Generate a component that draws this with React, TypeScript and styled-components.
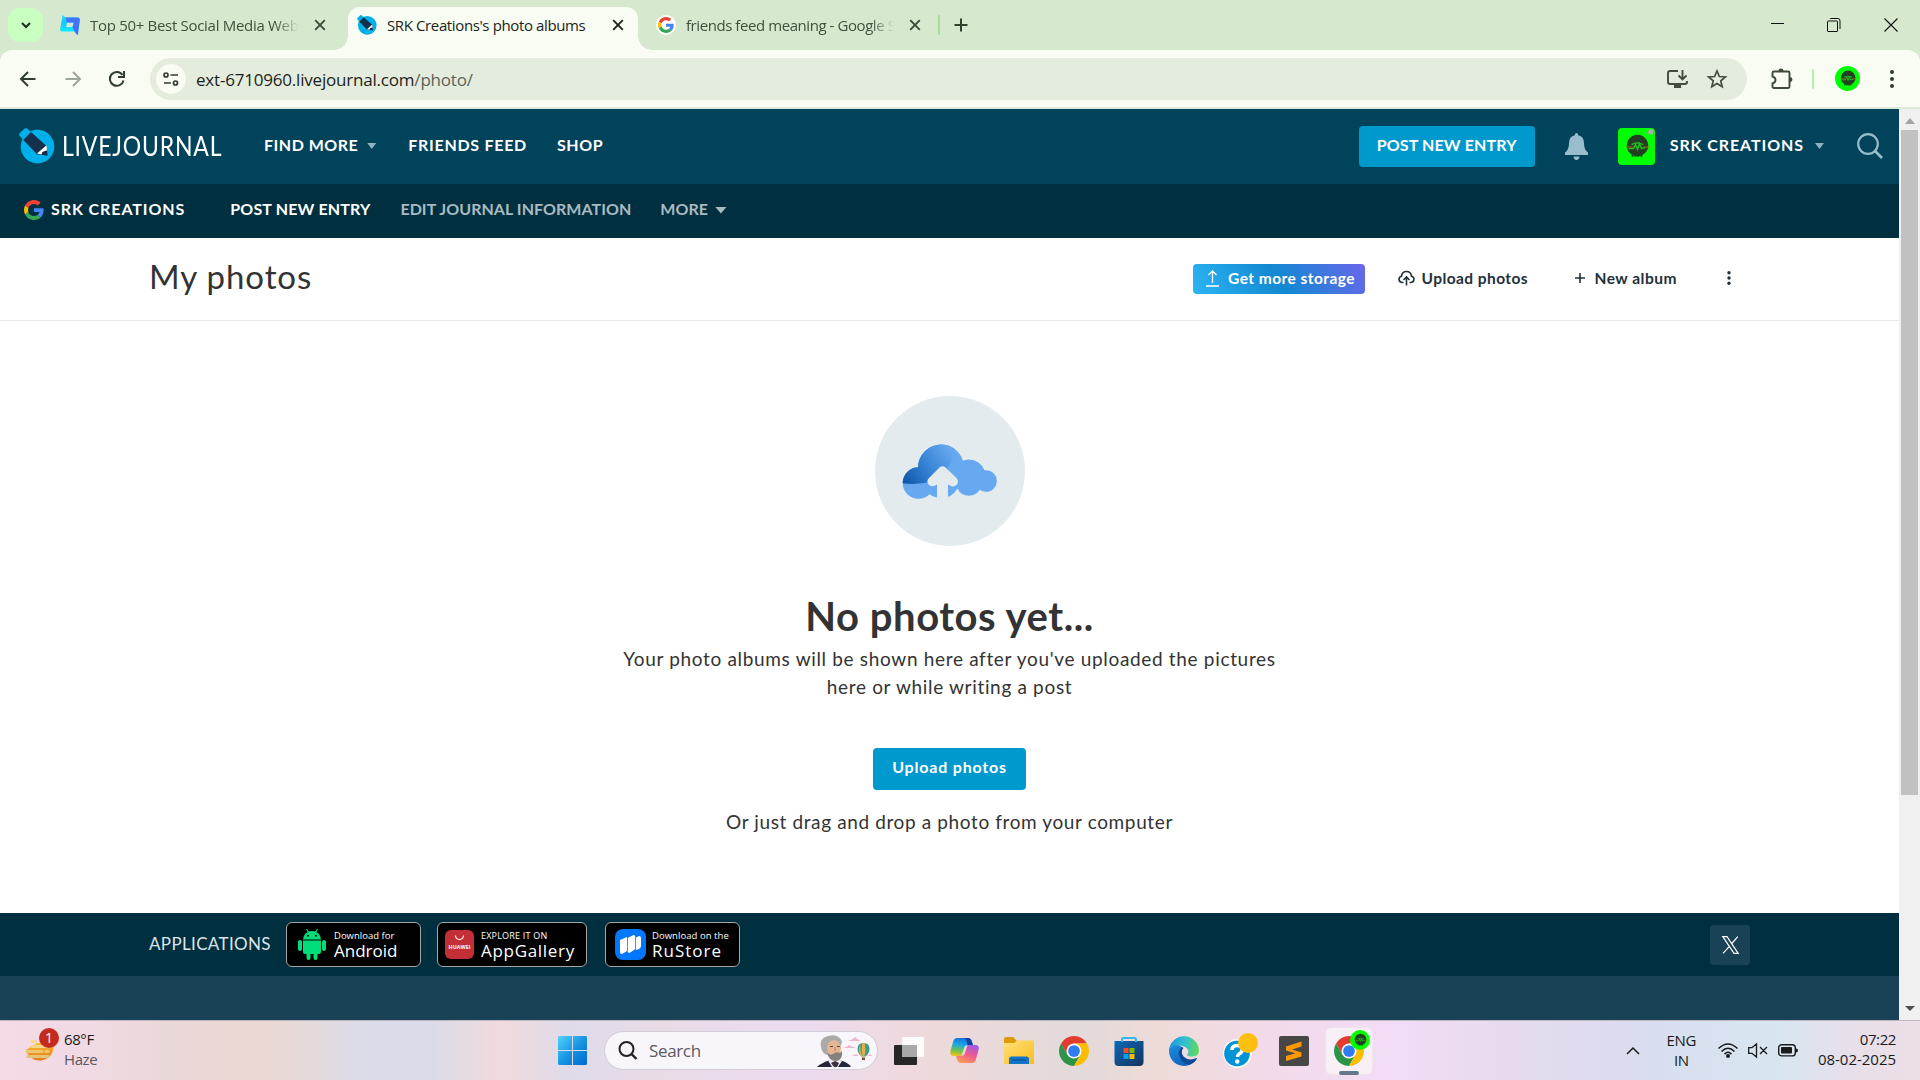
import React from "react";
import styled, { createGlobalStyle, css } from "styled-components";

const ui = `"Open Sans", "Noto Sans", sans-serif`;
const brand = `Lato, "Open Sans", sans-serif`;

const Global = createGlobalStyle`
  *, *::before, *::after { box-sizing: border-box; }
  html, body { margin: 0; padding: 0; }
  body { width: 1920px; height: 1080px; overflow: hidden; background: #fff; font-family: ${brand}; }
  svg { display: block; flex: none; overflow: visible; }
`;

const Screen = styled.div`
  width: 1920px;
  height: 1080px;
  display: flex;
  flex-direction: column;
  overflow: hidden;
`;

/* ---------- browser chrome ---------- */

const TabStrip = styled.div`
  height: 50px;
  background: #d6e9cf;
  display: flex;
  align-items: center;
  padding-left: 8px;
  font-family: ${ui};
`;

const TabSearch = styled.div`
  width: 35px;
  height: 34px;
  border-radius: 12px;
  background: #caffc2;
  display: grid;
  place-items: center;
`;

const Tab = styled.div<{ $width: number; $pl: number; $pr: number; $active?: boolean }>`
  width: ${(p) => p.$width}px;
  height: 43px;
  align-self: flex-end;
  display: flex;
  align-items: center;
  padding: 0 ${(p) => p.$pr}px 7px ${(p) => p.$pl}px;
  gap: 10px;
  color: #41503f;
  position: relative;
  ${(p) =>
    p.$active &&
    css`
      background: #f8fcf2;
      color: #1c231b;
      border-radius: 12px 12px 0 0;
      &::before,
      &::after {
        content: "";
        position: absolute;
        bottom: 0;
        width: 14px;
        height: 14px;
      }
      &::before {
        left: -14px;
        background: radial-gradient(circle at 0 0, transparent 13.5px, #f8fcf2 14px);
      }
      &::after {
        right: -14px;
        background: radial-gradient(circle at 100% 0, transparent 13.5px, #f8fcf2 14px);
      }
    `}
`;

const TabTitle = styled.span<{ $ls: number; $fade?: boolean }>`
  flex: 1;
  min-width: 0;
  margin-right: 5px;
  overflow: hidden;
  white-space: nowrap;
  font-size: 15px;
  line-height: 22px;
  letter-spacing: ${(p) => p.$ls}px;
  ${(p) => p.$fade && css`mask-image: linear-gradient(90deg, #000 calc(100% - 24px), transparent);`}
`;

const Divider = styled.div<{ $color: string; $ml: number; $mr: number }>`
  width: 2px;
  height: 20px;
  border-radius: 1px;
  background: ${(p) => p.$color};
  margin: 0 ${(p) => p.$mr}px 0 ${(p) => p.$ml}px;
`;

const WindowButtons = styled.div`
  margin-left: auto;
  display: flex;
  align-items: center;
  gap: 43px;
  padding-right: 22px;
`;

const Toolbar = styled.div`
  height: 57px;
  background: linear-gradient(#d6e9cf, #d6e9cf) top / 100% 12px no-repeat;
`;
const ToolbarInner = styled.div`
  height: 57px;
  background: #f8fcf2;
  border-radius: 12px 12px 0 0;
  display: flex;
  align-items: center;
  padding: 0 18px;
`;

const NavIcons = styled.div`
  display: flex;
  gap: 24.5px;
  width: 132px;
`;

const Omnibox = styled.div`
  width: 1597px;
  height: 42px;
  border-radius: 21px;
  background: #e4ecdd;
  display: flex;
  align-items: center;
  padding: 0 20px 0 6px;
`;

const SiteInfo = styled.div`
  width: 30px;
  height: 30px;
  border-radius: 50%;
  background: #f8fcf2;
  display: grid;
  place-items: center;
  margin-right: 10px;
`;

const Url = styled.div`
  flex: 1;
  padding-top: 2px;
  font-family: ${ui};
  font-size: 17px;
  line-height: 24px;
  letter-spacing: -0.2px;
  color: #1b1f1a;
  span { color: #5b635a; }
`;

const OmniActions = styled.div`
  display: flex;
  align-items: center;
  gap: 19px;
`;

const Extensions = styled.div`
  display: flex;
  align-items: center;
  margin-left: 24px;
`;

const MenuButton = styled.div`
  margin-left: 29px;
`;

const ChromeEdge = styled.div`
  height: 2px;
  background: #dfe8d9;
`;

/* ---------- page ---------- */

const Viewport = styled.div`
  height: 911px;
  display: flex;
`;

const Page = styled.div`
  width: 1899px;
  display: flex;
  flex-direction: column;
  background: #fff;
  color: #333;
`;

const Scrollbar = styled.div`
  width: 21px;
  background: #f0f0f0;
  display: flex;
  flex-direction: column;
  align-items: center;
  justify-content: space-between;
  padding: 9px 0 8px;
`;
const ScrollThumb = styled.div`
  width: 17px;
  height: 665px;
  margin: 6px 0 auto;
  background: #c1c1c1;
`;

const Header = styled.header`
  height: 75px;
  background: #00435a;
  display: flex;
  align-items: center;
  padding: 0 16px 1px 19px;
`;

const Wordmark = styled.div`
  width: 202px;
  margin: 0 0 1px 7px;
  font-size: 26px;
  line-height: 32px;
  letter-spacing: 0.9px;
  color: #fff;
  span {
    display: inline-block;
    transform: scaleX(0.885);
    transform-origin: left;
  }
`;

const NavLink = styled.span<{ $ls?: number; $ml?: number; $muted?: boolean }>`
  font-size: 16px;
  font-weight: 700;
  line-height: 20px;
  white-space: nowrap;
  letter-spacing: ${(p) => p.$ls ?? 0.5}px;
  margin-left: ${(p) => p.$ml ?? 0}px;
  margin-bottom: 2px;
  color: ${(p) => (p.$muted ? "#a9bac2" : "#fff")};
`;

const Caret = styled.i<{ $w: number; $h: number; $ml: number; $color?: string }>`
  width: ${(p) => p.$w}px;
  height: ${(p) => p.$h}px;
  margin-left: ${(p) => p.$ml}px;
  background: ${(p) => p.$color ?? "#8fb2c1"};
  clip-path: polygon(0 0, 100% 0, 50% 100%);
`;

const HeaderRight = styled.div`
  margin-left: auto;
  display: flex;
  align-items: center;
  gap: 30px;
`;
const Account = styled.div`
  display: flex;
  align-items: center;
  padding-right: 3px;
`;

const PrimaryButton = styled.button<{ $w: number; $h: number; $ls: number; $pb?: number }>`
  width: ${(p) => p.$w}px;
  height: ${(p) => p.$h}px;
  padding: 0 0 ${(p) => p.$pb ?? 3}px;
  border: 0;
  border-radius: 4px;
  background: #0099ce;
  color: #fff;
  font: 700 16px/20px ${brand};
  letter-spacing: ${(p) => p.$ls}px;
  white-space: nowrap;
`;

const SubHeader = styled.nav`
  height: 54px;
  background: #002f3f;
  display: flex;
  align-items: center;
  padding: 0 0 2px 24px;
`;

const TitleBar = styled.div`
  height: 83px;
  border-bottom: 1px solid #e8e9e9;
  padding: 0 167px 0 149px;
  display: flex;
  align-items: center;
`;

const Title = styled.h1`
  margin: 0 auto 6px 0;
  font-size: 33px;
  line-height: 40px;
  font-weight: 400;
  letter-spacing: 0.9px;
  color: #333;
`;

const StorageButton = styled.button`
  width: 172px;
  height: 30px;
  border: 0;
  border-radius: 4px;
  padding: 0 0 2px 13px;
  display: flex;
  align-items: center;
  gap: 9px;
  background: linear-gradient(60deg, #2cb5f4 0%, #1288d2 50%, #6a66ea 100%);
  color: #fff;
  font: 700 15.5px/20px ${brand};
  letter-spacing: 0.45px;
  white-space: nowrap;
`;

const ToolAction = styled.span<{ $ml: number; $gap: number; $ls?: number }>`
  display: flex;
  align-items: center;
  gap: ${(p) => p.$gap}px;
  margin-left: ${(p) => p.$ml}px;
  margin-bottom: 2px;
  letter-spacing: ${(p) => p.$ls ?? 0}px;
  font-size: 15.5px;
  font-weight: 700;
  line-height: 20px;
  color: #22313a;
  white-space: nowrap;
`;

const Empty = styled.main`
  height: 592px;
  display: flex;
  flex-direction: column;
  align-items: center;
  padding-top: 75px;
`;

const CloudDisc = styled.div`
  width: 150px;
  height: 150px;
  border-radius: 50%;
  background: #e3ebee;
`;

const EmptyTitle = styled.h2`
  margin: 44px 0 0;
  font-size: 40px;
  line-height: 52px;
  font-weight: 700;
  letter-spacing: 0.55px;
  color: #333;
`;

const EmptyText = styled.p<{ $mt: number; $ls: number }>`
  margin: ${(p) => p.$mt}px 0 0;
  font-size: 19px;
  line-height: 28px;
  letter-spacing: ${(p) => p.$ls}px;
  text-align: center;
  color: #333;
  white-space: nowrap;
`;

const UploadArea = styled.div`
  margin-top: 47px;
`;

const Footer = styled.footer`
  height: 63px;
  background: #002f3f;
  display: flex;
  align-items: center;
  padding: 0 149px;
`;

const FooterLabel = styled.span`
  width: 137px;
  margin-bottom: 2px;
  font-size: 17px;
  line-height: 22px;
  letter-spacing: 0.35px;
  color: #dbe5e9;
`;

const StoreBadge = styled.div<{ $w: number; $mr: number; $pl: number; $gap: number }>`
  width: ${(p) => p.$w}px;
  height: 45px;
  margin-right: ${(p) => p.$mr}px;
  padding-left: ${(p) => p.$pl}px;
  display: flex;
  align-items: center;
  gap: ${(p) => p.$gap}px;
  border: 1px solid #a6a6a6;
  border-radius: 6px;
  background: #000;
  color: #fff;
`;

const BadgeText = styled.div<{ $small: number; $ls: number; $big: number; $bls: number; $w?: number }>`
  display: flex;
  flex-direction: column;
  white-space: nowrap;
  font-family: "Open Sans", sans-serif;
  small {
    font-size: ${(p) => p.$small}px;
    line-height: 11px;
    letter-spacing: ${(p) => p.$ls}px;
  }
  b {
    font-weight: ${(p) => p.$w ?? 400};
    font-size: ${(p) => p.$big}px;
    line-height: 19px;
    letter-spacing: ${(p) => p.$bls}px;
  }
`;

const SocialButton = styled.div`
  width: 40px;
  height: 40px;
  margin: 1px 0 0 auto;
  border-radius: 4px;
  background: #1a4256;
  display: grid;
  place-items: center;
`;

const FooterLower = styled.div`
  flex: 1;
  background: #1a4256;
`;

/* ---------- taskbar ---------- */

const Taskbar = styled.div`
  height: 60px;
  border-top: 1px solid #bdb6c0;
  display: flex;
  align-items: center;
  font-family: ${ui};
  color: #1b1b1b;
  background: linear-gradient(
    90deg,
    #f4dbe6 0, #f1dae3 90px, #e9d8d8 170px, #ead8d3 270px, #e2dadd 320px, #dcdce9 360px,
    #dadce9 430px, #f0dadd 500px, #e0dbea 570px, #e9dbe6 660px, #ecdbf0 800px, #eed9da 930px,
    #e3dada 1080px, #eedbd8 1160px, #f3daea 1270px, #f2ddf6 1390px, #e8daee 1500px,
    #d9ddee 1640px, #d8e6f1 1780px, #e7dfea 1850px, #eddfe6 1920px
  );
`;

const Weather = styled.div`
  width: 558px;
  padding-left: 25px;
  display: flex;
  align-items: center;
  gap: 9px;
`;
const WeatherIcon = styled.div`
  width: 30px;
  height: 60px;
  position: relative;
`;
const Count = styled.span`
  position: absolute;
  left: 14px;
  top: 7px;
  width: 20px;
  height: 20px;
  border-radius: 50%;
  background: #c42b1c;
  color: #fff;
  font-size: 14px;
  line-height: 20px;
  text-align: center;
`;
const TwoLines = styled.div<{ $align?: string; $mb?: number }>`
  display: flex;
  flex-direction: column;
  margin-bottom: ${(p) => p.$mb ?? 4}px;
  text-align: ${(p) => p.$align ?? "left"};
  font-size: 15px;
  line-height: 20px;
  letter-spacing: -0.4px;
  white-space: nowrap;
`;
const Dim = styled.span`
  color: #5c585d;
`;
const DateText = styled.span`
  letter-spacing: -0.02px;
`;

const SearchPill = styled.div`
  width: 274px;
  height: 39px;
  margin: 0 16px 0 17px;
  border-radius: 20px;
  border: 1px solid #d2cbd8;
  background: #f8f5fb;
  display: flex;
  align-items: center;
  padding: 0 4px 0 13px;
  font-size: 17px;
  letter-spacing: -0.35px;
  color: #5c5a60;
  svg:last-child { margin-left: auto; }
  svg:first-child { margin-right: 12px; }
`;

const AppIcons = styled.div`
  display: flex;
  align-items: center;
  gap: 25px;
`;

const HelpApp = styled.div`
  margin: 0 -5px 0 -1px;
`;

const ActiveApp = styled.div`
  width: 48px;
  height: 48px;
  margin-left: -9px;
  border-radius: 6px;
  background: #f8f0f6;
  border: 1px solid #efe4ee;
  position: relative;
  display: grid;
  place-items: center;
  &::after {
    content: "";
    position: absolute;
    bottom: -1px;
    left: 13px;
    width: 20px;
    height: 4px;
    border-radius: 2px;
    background: #65788a;
  }
`;
const ActiveBadge = styled.div`
  position: absolute;
  left: 24px;
  top: 2px;
`;

const Tray = styled.div`
  margin-left: auto;
  display: flex;
  align-items: center;
  padding-right: 24px;
`;
const TrayExpand = styled.div`
  margin-right: 27px;
`;
const TrayIcons = styled.div`
  display: flex;
  align-items: center;
  gap: 10px;
  margin: 0 20px 0 22px;
`;

/* ---------- drawings ---------- */

const Close = ({ c }: { c: string }) => (
  <svg width="12" height="12" viewBox="0 0 12 12">
    <path d="M1.2 1.2 10.8 10.8M10.8 1.2 1.2 10.8" stroke={c} strokeWidth="1.9" />
  </svg>
);

const GoogleG = ({ size }: { size: number }) => (
  <svg width={size} height={size} viewBox="0 0 48 48">
    <path fill="#EA4335" d="M24 9.5c3.54 0 6.71 1.22 9.21 3.6l6.85-6.85C35.9 2.38 30.47 0 24 0 14.62 0 6.51 5.38 2.56 13.22l7.98 6.19C12.43 13.72 17.74 9.5 24 9.5z" />
    <path fill="#4285F4" d="M46.98 24.55c0-1.57-.15-3.09-.38-4.55H24v9.02h12.94c-.58 2.96-2.26 5.48-4.78 7.18l7.73 6c4.51-4.18 7.09-10.36 7.09-17.65z" />
    <path fill="#FBBC05" d="M10.53 28.59c-.48-1.45-.76-2.99-.76-4.59s.27-3.14.76-4.59l-7.98-6.19C.92 16.46 0 20.12 0 24c0 3.88.92 7.54 2.56 10.78l7.97-6.19z" />
    <path fill="#34A853" d="M24 48c6.48 0 11.93-2.13 15.89-5.81l-7.73-6c-2.15 1.45-4.92 2.3-8.16 2.3-6.26 0-11.57-4.22-13.47-9.91l-7.98 6.19C6.51 42.62 14.62 48 24 48z" />
  </svg>
);

const GoogleTabIcon = () => (
  <svg width="20" height="20" viewBox="0 0 20 20">
    <circle cx="10" cy="10" r="10" fill="#fff" />
    <g transform="translate(2 2)"><GoogleG size={16} /></g>
  </svg>
);

const LJIcon = ({ size }: { size: number }) => (
  <svg width={size} height={size} viewBox="0 0 36 36">
    <circle cx="18.5" cy="18.6" r="16.8" fill="#00b0ea" />
    <path d="M.3 7.2Q-.3 6 1 4.8L5.8.6Q7 -.3 8.2.6L12 4 4.3 12Z" fill="#00b0ea" />
    <path d="M4.3 12 12 4 27.8 18.2 28.6 27.8 18 26.2Z" fill="#15304a" />
    <path d="M27.6 17.2 18 25.6 22.6 26.4Q22.6 23 28 22.6Z" fill="#fff" />
  </svg>
);

const DocHubIcon = () => (
  <svg width="20" height="20" viewBox="0 0 20 20">
    <defs>
      <linearGradient id="dh" x1="0" y1="0" x2="0" y2="1">
        <stop offset="0" stopColor="#22d8ff" /><stop offset=".5" stopColor="#18c4ff" /><stop offset="1" stopColor="#10eeff" />
      </linearGradient>
    </defs>
    <path d="M2.5 0 5.5 2.5H17.5Q20 2.5 19.8 5L18 16.5H2Q0 16.5 0 14.5L2 4ZM7 7.5 6.3 12H13L13.8 7.5Z" fill="url(#dh)" fillRule="evenodd" />
    <path d="M5.5 2.5H17.5Q20 2.5 19.8 5L18 19.5 17 20 14.5 16.5 12.5 12 13.8 7.5H7Z" fill="#3f74ff" />
  </svg>
);

const Face = ({ size, square }: { size: number; square?: boolean }) => (
  <svg width={size} height={size} viewBox="0 0 38 38">
    {square ? <rect width="38" height="38" rx="4" fill="#00ff00" /> : <circle cx="19" cy="19" r="19" fill="#00ff00" />}
    <circle cx="20" cy="18" r="11" fill="#243d24" />
    <path d="M11 21h5l2-4 2 5 2-6 2 5 4-1M14 17q5-3 12 0" stroke="#1fc01f" strokeWidth="1.5" fill="none" />
    <path d="M9 19.5h6M26 19.5h6" stroke="#c0552c" strokeWidth="1.2" />
    <path d="M14 28.5h12" stroke="#164f16" strokeWidth="2" strokeDasharray="2 1" />
    {square && <circle cx="33.5" cy="4" r="2.6" fill="#b3a7b0" />}
  </svg>
);

const ChromeIcon = () => (
  <svg width="30" height="30" viewBox="0 0 48 48">
    <path fill="#e33b2e" d="M3.22 12A24 24 0 0 1 44.78 12H24V24L13.61 30Z" />
    <path fill="#2b9446" d="M3.22 12 13.61 30 24 24 34.39 30 24 48A24 24 0 0 1 3.22 12Z" />
    <path fill="#fdbd00" d="M44.78 12A24 24 0 0 1 24 48L34.39 30 24 24V12Z" />
    <circle cx="24" cy="24" r="12" fill="#fff" />
    <circle cx="24" cy="24" r="9.4" fill="#2f7cf0" />
  </svg>
);

const Kebab = ({ c, r, gap }: { c: string; r: number; gap: number }) => (
  <svg width="6" height="20" viewBox="0 0 6 20">
    {[-gap, 0, gap].map((d) => <circle key={d} cx="3" cy={10 + d} r={r} fill={c} />)}
  </svg>
);

const CloudArt = () => (
  <svg width="150" height="150" viewBox="0 0 150 150">
    <defs>
      <linearGradient id="cg" x1="30" y1="86" x2="76" y2="56" gradientUnits="userSpaceOnUse">
        <stop offset="0" stopColor="#1059ab" /><stop offset=".45" stopColor="#3380d3" /><stop offset="1" stopColor="#64a7ef" />
      </linearGradient>
      <clipPath id="cc">
        <circle cx="43.5" cy="87" r="15.8" /><circle cx="66" cy="71.5" r="23" /><circle cx="94" cy="80" r="16.5" />
        <circle cx="111" cy="85" r="10.8" /><circle cx="66" cy="83" r="19" /><circle cx="94" cy="87" r="12.8" />
      </clipPath>
    </defs>
    <g clipPath="url(#cc)">
      <rect x="20" y="40" width="110" height="70" fill="#67a9f0" />
      <path d="M20 40H82Q80 72 62 83 45 91 20 86Z" fill="url(#cg)" />
    </g>
    <path d="M62 104V88.5Q57 92 53.5 88.5 51 85 54 82L64.5 71.5Q67.5 69 70.5 71.5L81.5 82Q84.5 85.5 81.5 89 78 92 73 88.5V104Z" fill="#e3ebee" />
  </svg>
);

const AndroidIcon = () => (
  <svg width="28" height="31" viewBox="0 0 28 31">
    <g fill="#00de7a">
      <path d="M5 10.5A9 8.5 0 0 1 23 10.5Z" />
      <path d="M8.5 0 11 4M19.5 0 17 4" stroke="#00de7a" strokeWidth="1.2" />
      <path d="M5 11.5H23V23Q23 25 21 25H19.5V29Q19.5 31 17.5 31T15.5 29V25H12.5V29Q12.5 31 10.5 31T8.5 29V25H7Q5 25 5 23Z" />
      <rect x="0" y="11" width="4" height="11" rx="2" /><rect x="24" y="11" width="4" height="11" rx="2" />
    </g>
    <circle cx="10" cy="6.8" r="1" /><circle cx="18" cy="6.8" r="1" />
  </svg>
);

const HuaweiIcon = () => (
  <svg width="29" height="29" viewBox="0 0 29 29">
    <rect width="29" height="29" rx="6" fill="#c42e37" />
    <path d="M10.5 5.5a4 4 0 0 0 8 0" stroke="#fff" strokeWidth="1.2" fill="none" />
    <text x="14.5" y="18.5" fontSize="5.3" fontWeight="700" fill="#fff" textAnchor="middle" fontFamily="Open Sans" textLength="22">HUAWEI</text>
  </svg>
);

const RuStoreIcon = () => (
  <svg width="31" height="31" viewBox="0 0 31 31">
    <rect width="31" height="31" rx="8" fill="#0077ff" />
    <g fill="#fff"><path d="M5 11l7-3v14l-5 3q-2 0-2-2z" /><path d="M12.5 9l6-3q2 0 2 2v12l-6 4q-2 0-2-2z" /><path d="M21 8.5l3-1.5q2 0 2 2v8q0 2-2 3l-3 1z" /></g>
    <path d="M12.5 8v14M20.6 7v13" stroke="#0077ff" strokeWidth=".6" />
  </svg>
);

const WeatherArt = () => (
  <svg width="30" height="60" viewBox="0 0 30 60">
    <defs><linearGradient id="sun" x1="0" y1="0" x2="0" y2="1"><stop offset="0" stopColor="#f8bd2c" /><stop offset="1" stopColor="#ef7413" /></linearGradient></defs>
    <path d="M1 29A14 14 0 0 0 28.5 27V22H12Z" fill="url(#sun)" />
    <g strokeLinecap="round" strokeWidth="3.2">
      <path d="M7 20.5h3" stroke="#f8d98a" /><path d="M7 25.5h17" stroke="#f5d68a" /><path d="M2 30.5h15M21 30.5h2" stroke="#ecc976" /><path d="M3 35.5h20" stroke="#e3c47a" />
    </g>
  </svg>
);

const Jules = () => (
  <svg width="57" height="34" viewBox="0 0 57 34">
    <path d="M1 33Q5 29 13 26.5L25 26.5Q33 29 35 33Z" fill="#24263a" />
    <path d="M12 26.5 16 33H22L26 27 20 24Z" fill="#eceaf2" />
    <path d="M15 29 18 33H21L23 29 19 27Z" fill="#3a3040" />
    <path d="M9 12Q10 4 17 4T25 13Q25 24 19 25 10 24 9 12Z" fill="#e5b595" />
    <path d="M5 13Q3 4 12 2 23 -1 26 8L25 12Q22 6 17 6 12 7 11 13L12 21Q6 20 5 13Z" fill="#a9aba9" />
    <path d="M11 18Q14 22 17 20 20 17 24 19L26 17Q27 25 21 27 13 28 11 18Z" fill="#85827e" />
    <path d="M14 12.5h3M21 12.5h3" stroke="#5a453c" strokeWidth="1.1" />
    <path d="M19 13v4" stroke="#c98f70" strokeWidth="1.4" />
    <path d="M32 7h13l-3-1.5-3-2.5-3 2.5zM27 14h13l-4-1.5-3-1.5-2 1.5zM36 22h7l-3-2zM51 22h5l-2-2z" fill="#efb4ce" />
    <path d="M41.5 15Q41.5 9 47.5 9T53.5 15Q53.5 19 49.5 22.5H45.5Q41.5 19 41.5 15Z" fill="#3c9b88" />
    <path d="M44.5 10Q43.5 17 46.5 22.5H45.5Q41 18 44.5 10ZM46.5 9H48.5Q50.5 16 48.3 22.5H46.7Q44.8 16 46.5 9Z" fill="#e5b04c" />
    <rect x="46" y="23.5" width="3" height="2.5" fill="#7d4a31" />
  </svg>
);

const WindowsLogo = () => (
  <svg width="29" height="29" viewBox="0 0 29 29">
    <defs><linearGradient id="win" x1="0" y1="0" x2="1" y2="1"><stop offset="0" stopColor="#51d2ff" /><stop offset=".55" stopColor="#1490df" /><stop offset="1" stopColor="#0068cf" /></linearGradient></defs>
    <path d="M1 0H14V14H0V1ZM15 0H28L29 1V14H15ZM0 15H14V29H1L0 28ZM15 15H29V28L28 29H15Z" fill="url(#win)" />
  </svg>
);

const TaskView = () => (
  <svg width="31" height="30" viewBox="0 0 31 30">
    <rect x="0" y="9" width="23" height="20" rx="1" fill="#272727" />
    <rect x="8" y="1" width="22" height="20" rx="1" fill="#fff" fillOpacity=".88" />
    <rect x="8" y="9" width="15" height="12" fill="#a9a9a9" />
  </svg>
);

const Copilot = () => (
  <svg width="29" height="26" viewBox="0 0 29 26">
    <defs>
      <linearGradient id="cpa" x1=".4" y1="0" x2=".2" y2="1"><stop offset="0" stopColor="#1473d8" /><stop offset=".35" stopColor="#1fa6e8" /><stop offset=".65" stopColor="#62c05a" /><stop offset="1" stopColor="#f4c419" /></linearGradient>
      <linearGradient id="cpb" x1=".8" y1="0" x2=".3" y2="1"><stop offset="0" stopColor="#9a5ae8" /><stop offset=".5" stopColor="#ee5a94" /><stop offset="1" stopColor="#fb9a52" /></linearGradient>
    </defs>
    <path d="M7 0H18Q21 0 22 4L23 7H18Q15 7 14 10L11.5 18H4Q-1 18 .5 13L3 4Q4 0 7 0Z" fill="url(#cpa)" />
    <path d="M22 25H11Q8 25 7 21L6 18H11Q14 18 15 15L17.5 7H25Q30 7 28.5 12L26 21Q25 25 22 25Z" fill="url(#cpb)" />
    <path d="M17.5 7H23L21 1.5Q20 0 18 0H14Q17 1 17.5 7Z" fill="#173fa8" />
  </svg>
);

const Explorer = () => (
  <svg width="30" height="27" viewBox="0 0 30 27">
    <defs><linearGradient id="fol" x1="0" y1="0" x2="1" y2="1"><stop offset="0" stopColor="#ffe07a" /><stop offset="1" stopColor="#fbbd1d" /></linearGradient></defs>
    <path d="M0 2Q0 0 2 0H9L13 4H28Q30 4 30 6V10H0Z" fill="#dd9a09" />
    <path d="M0 6H10L13 3.5H30V27H0Z" fill="url(#fol)" />
    <path d="M5 27V22Q5 19.5 7.5 19.5H22.5Q25 19.5 25 22V27Z" fill="#1174c9" />
    <path d="M8 23h14" stroke="#0a4f91" strokeWidth="1.2" />
  </svg>
);

const StoreIcon = () => (
  <svg width="30" height="30" viewBox="0 0 30 30">
    <defs><linearGradient id="st" x1="0" y1="0" x2="1" y2="1"><stop offset="0" stopColor="#0c69b7" /><stop offset="1" stopColor="#16335e" /></linearGradient></defs>
    <path d="M.5 5H29.5V26Q29.5 30 25.5 30H4.5Q.5 30 .5 26Z" fill="url(#st)" />
    <path d="M8 6V3.5Q8 2 9.5 2H20.5Q22 2 22 3.5V6" stroke="#2fb7f2" strokeWidth="2" fill="none" />
    <path fill="#f25022" d="M9.5 12h5v5h-5z" /><path fill="#7fba00" d="M15.5 12h5v5h-5z" /><path fill="#00a4ef" d="M9.5 18h5v5h-5z" /><path fill="#ffb900" d="M15.5 18h5v5h-5z" />
  </svg>
);

const Edge = () => (
  <svg width="30" height="30" viewBox="0 0 30 30">
    <defs>
      <linearGradient id="ea" x1="0" y1=".3" x2="1" y2=".4"><stop offset="0" stopColor="#1f93dd" /><stop offset=".5" stopColor="#2fbfd6" /><stop offset="1" stopColor="#62da5a" /></linearGradient>
      <linearGradient id="eb" x1="0" y1="0" x2=".7" y2="1"><stop offset="0" stopColor="#1b8fe0" /><stop offset="1" stopColor="#0f5fb8" /></linearGradient>
    </defs>
    <path d="M.3 12A15 15 0 0 0 15 30Q23 30 27.8 22.5 20 27 14.5 21.5 10 16 13.5 11.5 8 6 .3 12Z" fill="url(#eb)" />
    <path d="M13 11Q8 15 10.5 21 14 28.5 21 28.5 25.5 27 28 22.5 27.5 21.5 26 22.5 19 25 14.5 20.5 11 15.5 14.5 12Z" fill="#0b4a96" />
    <path d="M.3 12.5A15 15 0 0 1 30 14Q30 20.5 23.5 20.5 18 20.5 18 18.5 20 17 19 14 17 10 11.5 9.5 4 8.5 .3 12.5Z" fill="url(#ea)" />
  </svg>
);

const HelpIcon = () => (
  <svg width="36" height="36" viewBox="0 0 36 36">
    <circle cx="14.5" cy="20.5" r="14.5" fill="#f4f8fc" /><circle cx="14" cy="20.5" r="12.8" fill="#0093d6" />
    <path d="M9 17Q9 12.5 14 12.5T19 17Q19 19.5 16 21 14.5 22 14.5 24" stroke="#fff" strokeWidth="3.6" fill="none" />
    <circle cx="14.3" cy="28.5" r="2.2" fill="#fff" /><circle cx="25" cy="10" r="10" fill="#ffbf0f" />
  </svg>
);

const Sublime = () => (
  <svg width="30" height="30" viewBox="0 0 30 30">
    <rect width="30" height="30" rx="2" fill="#474747" />
    <path d="M7 10.5 22.5 5.5V10.5L13 13.6 22.5 16.5V20.5L7 25V20L16.5 17.2 7 14.5Z" fill="#ff9800" />
  </svg>
);

export default function App() {
  return (
    <>
      <Global />
      <Screen>
        <TabStrip>
          <TabSearch>
            <svg width="10" height="7" viewBox="0 0 10 7"><path d="M1 1l4 4 4-4" stroke="#16301a" strokeWidth="2" fill="none" /></svg>
          </TabSearch>
          <Tab $width={305} $pl={17} $pr={22}>
            <DocHubIcon />
            <TabTitle $ls={-0.3} $fade>Top 50+ Best Social Media Web</TabTitle>
            <Close c="#3b4a3b" />
          </Tab>
          <Tab $width={290} $pl={9} $pr={14} $active>
            <LJIcon size={20} />
            <TabTitle $ls={-0.38}>SRK Creations's photo albums</TabTitle>
            <Close c="#1c231b" />
          </Tab>
          <Tab $width={290} $pl={18} $pr={7}>
            <GoogleTabIcon />
            <TabTitle $ls={-0.43} $fade>friends feed meaning - Google S</TabTitle>
            <Close c="#3b4a3b" />
          </Tab>
          <Divider $color="#a2de98" $ml={10} $mr={14} />
          <svg width="14" height="14" viewBox="0 0 14 14"><path d="M7 .5v13M.5 7h13" stroke="#33402f" strokeWidth="2" /></svg>
          <WindowButtons>
            <svg width="14" height="14" viewBox="0 0 14 14"><path d="M1 5.5h13" stroke="#111" /></svg>
            <svg width="14" height="14" viewBox="0 0 14 14"><path d="M.5 3.5Q.5 3 1 3H10Q10.5 3 10.5 3.5V13Q10.5 13.5 10 13.5H1Q.5 13.5 .5 13ZM3 1Q3 .5 4 .5H11Q13 .5 13 3V11" stroke="#111" fill="none" /></svg>
            <svg width="14" height="14" viewBox="0 0 14 14"><path d="M.5.5l13 13M13.5.5l-13 13" stroke="#111" strokeWidth="1.1" /></svg>
          </WindowButtons>
        </TabStrip>
        <Toolbar>
          <ToolbarInner>
            <NavIcons>
              <svg width="20" height="20" viewBox="0 0 20 20"><path d="M17.5 10H3M10 3 3 10l7 7" stroke="#2f3d2e" strokeWidth="2" fill="none" /></svg>
              <svg width="20" height="20" viewBox="0 0 20 20"><path d="M2.5 10H17M10 3l7 7-7 7" stroke="#9da69a" strokeWidth="2" fill="none" /></svg>
              <svg width="20" height="20" viewBox="0 0 20 20"><path d="M16.5 11.5A6.9 6.9 0 1 1 15.5 6M17 2v6h-6" stroke="#2f3d2e" strokeWidth="2" fill="none" /></svg>
            </NavIcons>
            <Omnibox>
              <SiteInfo>
                <svg width="16" height="16" viewBox="0 0 16 16"><g fill="none" stroke="#2f3d2e" strokeWidth="1.7"><circle cx="3" cy="4" r="2" /><path d="M7.5 4H15M1 12H8" /><circle cx="12.5" cy="12" r="2" /></g></svg>
              </SiteInfo>
              <Url>ext-6710960.livejournal.com<span>/photo/</span></Url>
              <OmniActions>
                <svg width="21" height="20" viewBox="0 0 21 20"><path d="M11 2H3Q1 2 1 4V13Q1 15 3 15H18Q20 15 20 13V12M15.5 1v9M11.5 6.5l4 4 4-4" stroke="#444c42" strokeWidth="1.9" fill="none" /><path d="M7 15h7v4H7z" fill="#444c42" /></svg>
                <svg width="20" height="20" viewBox="0 0 20 20"><path d="M10 2l2.4 5.5 6 .5-4.6 3.9 1.4 5.8L10 14.6l-5.2 3.1 1.4-5.8L1.6 8l6-.5z" stroke="#444c42" strokeWidth="1.7" fill="none" /></svg>
              </OmniActions>
            </Omnibox>
            <Extensions>
              <svg width="22" height="22" viewBox="0 0 22 22"><path d="M3 3.5H17Q18.5 3.5 18.5 5V18.5Q18.5 20 17 20H3Q1.5 20 1.5 18.5V15.5Q4.5 14.5 4.5 12T1.5 8.5V5Q1.5 3.5 3 3.5Z" stroke="#3d4a3a" strokeWidth="1.9" fill="none" /><path d="M7.5 3a2.5 2.5 0 0 1 5 0zM19 9a2.5 2.5 0 0 1 0 5z" fill="#3d4a3a" /></svg>
              <Divider $color="#b5efab" $ml={19} $mr={21} />
              <Face size={25} />
              <MenuButton><Kebab c="#2f3d2e" r={2} gap={7} /></MenuButton>
            </Extensions>
          </ToolbarInner>
        </Toolbar>
        <ChromeEdge />

        <Viewport>
          <Page>
            <Header>
              <LJIcon size={36} />
              <Wordmark><span>LIVEJOURNAL</span></Wordmark>
              <NavLink>FIND MORE</NavLink>
              <Caret $w={9} $h={6} $ml={9} />
              <NavLink $ml={32} $ls={0.72}>FRIENDS FEED</NavLink>
              <NavLink $ml={30} $ls={0.6}>SHOP</NavLink>
              <HeaderRight>
                <PrimaryButton $w={176} $h={41} $ls={0.15}>POST NEW ENTRY</PrimaryButton>
                <svg width="23" height="27" viewBox="0 0 23 27"><path d="M11.5 0Q13 0 13.2 2.2 19 3.5 19 10 19 17 23 19.5V22H0V19.5Q4 17 4 10 4 3.5 9.8 2.2 10 0 11.5 0ZM8.5 23.5H14.5Q14 27 11.5 27T8.5 23.5Z" fill="#99bdcc" /></svg>
                <Account>
                  <Face size={37} square />
                  <NavLink $ml={15} $ls={0.92}>SRK CREATIONS</NavLink>
                  <Caret $w={9} $h={6} $ml={11} />
                </Account>
                <svg width="26" height="26" viewBox="0 0 26 26"><circle cx="11" cy="11" r="9.8" stroke="#99bdcc" strokeWidth="2.2" fill="none" /><path d="M18 18l7 7" stroke="#99bdcc" strokeWidth="2.6" /></svg>
              </HeaderRight>
            </Header>
            <SubHeader>
              <GoogleG size={20} />
              <NavLink $ml={7} $ls={0.92}>SRK CREATIONS</NavLink>
              <NavLink $ml={45} $ls={0.15}>POST NEW ENTRY</NavLink>
              <NavLink $ml={30} $ls={0.05} $muted>EDIT JOURNAL INFORMATION</NavLink>
              <NavLink $ml={29} $ls={0} $muted>MORE</NavLink>
              <Caret $w={12} $h={7} $ml={7} $color="#a9bac2" />
            </SubHeader>
            <TitleBar>
              <Title>My photos</Title>
              <StorageButton>
                <svg width="13" height="17" viewBox="0 0 13 17"><path d="M6.5 13V1M2.5 5l4-4 4 4M0 16h13" stroke="#fff" strokeWidth="1.3" fill="none" /></svg>
                Get more storage
              </StorageButton>
              <ToolAction $ml={33} $gap={6.5} $ls={0.42}>
                <svg width="17" height="16" viewBox="0 0 17 16"><path d="M5.5 12.5H4Q1 12 1 9.3 1 7 3.5 6.3 4 1.5 8.5 1.5T13.5 6.3Q16 7 16 9.3 16 12 13 12.5H11.5M8.5 15.5V7.5M5.5 10l3-3 3 3" stroke="#22313a" strokeWidth="1.6" fill="none" /></svg>
                Upload photos
              </ToolAction>
              <ToolAction $ml={47} $gap={9.5} $ls={0.5}>
                <svg width="10" height="10" viewBox="0 0 10 10"><path d="M5 0v10M0 5h10" stroke="#22313a" strokeWidth="1.6" /></svg>
                New album
              </ToolAction>
              <ToolAction $ml={49} $gap={0}><Kebab c="#22313a" r={1.7} gap={5.2} /></ToolAction>
            </TitleBar>
            <Empty>
              <CloudDisc><CloudArt /></CloudDisc>
              <EmptyTitle>No photos yet...</EmptyTitle>
              <EmptyText $mt={3} $ls={0.67}>Your photo albums will be shown here after you've uploaded the pictures<br />here or while writing a post</EmptyText>
              <UploadArea>
                <PrimaryButton $w={153} $h={42} $ls={0.8} $pb={5}>Upload photos</PrimaryButton>
              </UploadArea>
              <EmptyText $mt={18} $ls={0.62}>Or just drag and drop a photo from your computer</EmptyText>
            </Empty>
            <Footer>
              <FooterLabel>APPLICATIONS</FooterLabel>
              <StoreBadge $w={135} $mr={16} $pl={11} $gap={8}>
                <AndroidIcon />
                <BadgeText $small={9.5} $ls={0} $big={17} $bls={0} $w={500}><small>Download for</small><b>Android</b></BadgeText>
              </StoreBadge>
              <StoreBadge $w={150} $mr={18} $pl={7} $gap={7}>
                <HuaweiIcon />
                <BadgeText $small={9} $ls={0.2} $big={17} $bls={0.7}><small>EXPLORE IT ON</small><b>AppGallery</b></BadgeText>
              </StoreBadge>
              <StoreBadge $w={135} $mr={0} $pl={9} $gap={6}>
                <RuStoreIcon />
                <BadgeText $small={9.5} $ls={0.05} $big={17} $bls={1} $w={500}><small>Download on the</small><b>RuStore</b></BadgeText>
              </StoreBadge>
              <SocialButton>
                <svg width="17" height="18" viewBox="0 0 17 18"><path d="M.8.6H5L16.2 17.4H12ZM15.8.6 9.8 7.5M7.4 10.3 1 17.4" stroke="#fff" strokeWidth="1.2" fill="none" /></svg>
              </SocialButton>
            </Footer>
            <FooterLower />
          </Page>
          <Scrollbar>
            <svg width="10" height="6" viewBox="0 0 10 6"><path d="M5 0l5 6H0z" fill="#a3a3a3" /></svg>
            <ScrollThumb />
            <svg width="10" height="6" viewBox="0 0 10 6"><path d="M0 0h10L5 5z" fill="#4f4f4f" /></svg>
          </Scrollbar>
        </Viewport>

        <Taskbar>
          <Weather>
            <WeatherIcon><WeatherArt /><Count>1</Count></WeatherIcon>
            <TwoLines><span>68°F</span><Dim>Haze</Dim></TwoLines>
          </Weather>
          <WindowsLogo />
          <SearchPill>
            <svg width="19" height="19" viewBox="0 0 19 19"><circle cx="8.5" cy="8" r="7" stroke="#222" strokeWidth="2" fill="none" /><path d="M13.5 13l5 5" stroke="#222" strokeWidth="2.4" /></svg>
            <span>Search</span>
            <Jules />
          </SearchPill>
          <AppIcons>
            <TaskView />
            <Copilot />
            <Explorer />
            <ChromeIcon />
            <StoreIcon />
            <Edge />
            <HelpApp><HelpIcon /></HelpApp>
            <Sublime />
            <ActiveApp>
              <ChromeIcon />
              <ActiveBadge><Face size={20} /></ActiveBadge>
            </ActiveApp>
          </AppIcons>
          <Tray>
            <TrayExpand>
              <svg width="14" height="8" viewBox="0 0 14 8"><path d="M1 7l6-6 6 6" stroke="#1b1b1b" strokeWidth="1.5" fill="none" /></svg>
            </TrayExpand>
            <TwoLines $align="center" $mb={2}><span>ENG</span><span>IN</span></TwoLines>
            <TrayIcons>
              <svg width="20" height="15" viewBox="0 0 20 15"><g stroke="#1b1b1b" strokeWidth="1.5" fill="none"><path d="M.5 5.5Q10-3.5 19.5 5.5M3.5 8.5Q10 2 16.5 8.5M6.5 11.2Q10 7.5 13.5 11.2" /></g><circle cx="10" cy="13" r="2" fill="#1b1b1b" /></svg>
              <svg width="20" height="15" viewBox="0 0 20 15"><path d="M.7 4.7H4L8.5 1V14L4 10.3H.7ZM12 4l7 7M19 4l-7 7" stroke="#1b1b1b" strokeWidth="1.3" fill="none" /></svg>
              <svg width="20" height="13" viewBox="0 0 20 13"><rect x=".7" y=".7" width="16.6" height="11.2" rx="3" stroke="#1b1b1b" strokeWidth="1.4" fill="none" /><rect x="3" y="3" width="11" height="6.6" rx="1" fill="#1b1b1b" /><path d="M18 4.5q2 0 2 2t-2 2z" fill="#1b1b1b" /></svg>
            </TrayIcons>
            <TwoLines $align="right"><span>07:22</span><DateText>08-02-2025</DateText></TwoLines>
          </Tray>
        </Taskbar>
      </Screen>
    </>
  );
}
